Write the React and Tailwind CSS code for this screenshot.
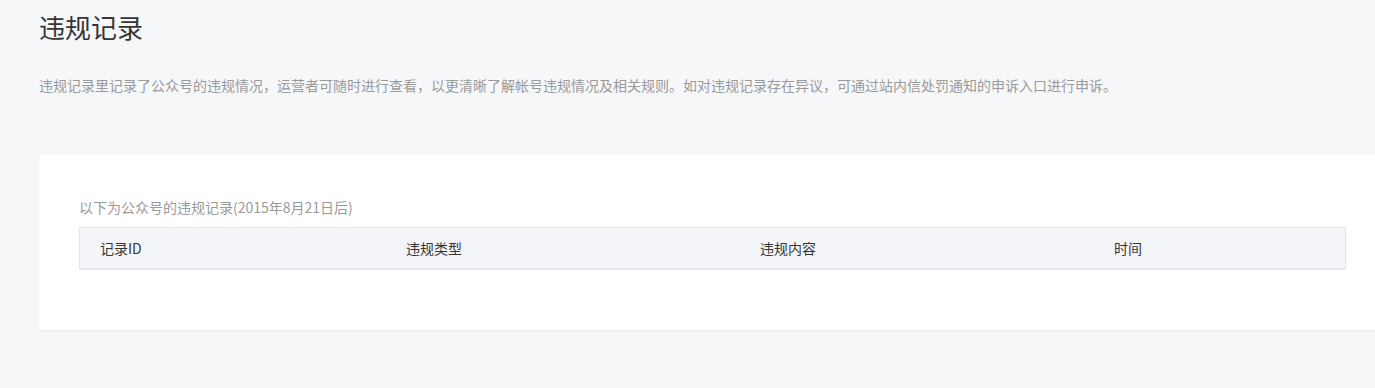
import React from 'react';

const columns = [
  { label: '记录ID', width: 'w-[306px]' },
  { label: '违规类型', width: 'w-[354px]' },
  { label: '违规内容', width: 'w-[354px]' },
  { label: '时间', width: 'flex-1' },
];

const App = () => {
  return (
    <div
      className="min-h-[388px] bg-[#f6f7f9] overflow-hidden"
      style={{ fontFamily: '"Noto Sans CJK SC", "Microsoft YaHei", sans-serif' }}
    >
      <div className="pl-[39px] w-[1386px]">
        {/* Page header */}
        <h2 className="pt-[8px] text-[26px] leading-[38px] text-[#353535] font-normal">违规记录</h2>
        <p className="mt-[29px] text-[14px] leading-[20px] text-[#9a9a9a]">
          违规记录里记录了公众号的违规情况，运营者可随时进行查看，以更清晰了解帐号违规情况及相关规则。如对违规记录存在异议，可通过站内信处罚通知的申诉入口进行申诉。
        </p>

        {/* Records card */}
        <div className="mt-[60px] bg-white rounded-[4px] shadow-[0_1px_2px_rgba(0,0,0,0.05)] px-[40px] pt-[42px] pb-[60px]">
          <p className="text-[14px] leading-[20px] text-[#9a9a9a]">以下为公众号的违规记录(2015年8月21日后)</p>
          <div className="mt-[10px] flex items-center h-[43px] pl-[20px] bg-[#f4f5f9] border border-[#e4e5ea] border-b-2 border-b-[#e6e6ec]">
            {columns.map(col => (
              <div key={col.label} className={`${col.width} text-[14px] text-[#353535]`}>
                {col.label}
              </div>
            ))}
          </div>
        </div>
      </div>
    </div>
  );
};

export default App;
